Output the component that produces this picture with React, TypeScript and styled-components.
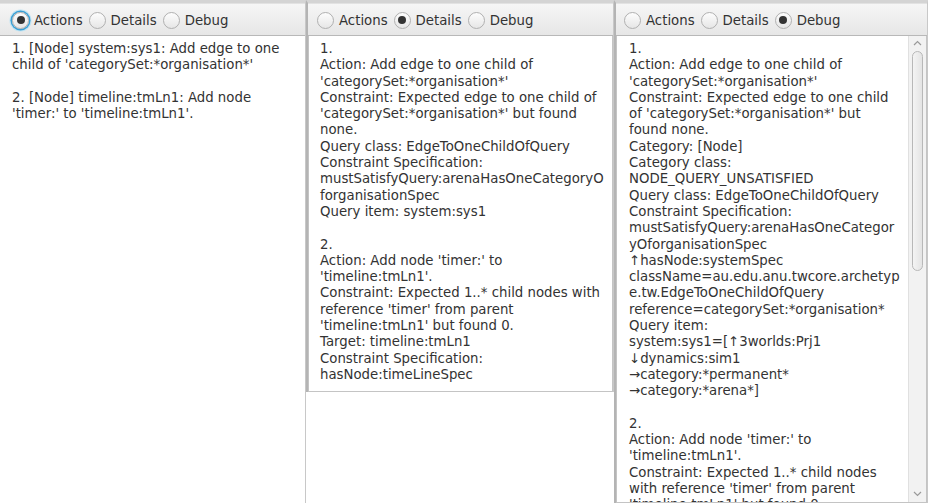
import React from "react";
import styled, { createGlobalStyle } from "styled-components";

const Global = createGlobalStyle`
  html, body { margin: 0; padding: 0; background: #ffffff; }
  body { width: 928px; height: 503px; overflow: hidden; font-family: "DejaVu Sans", "Liberation Sans", sans-serif; }
`;

const Row = styled.div`
  display: flex;
  align-items: flex-start;
  width: 928px;
  height: 503px;
  overflow: hidden;
`;

const Window = styled.div<{ $w: number; $h: number }>`
  width: ${(p) => p.$w}px;
  height: ${(p) => p.$h}px;
  box-sizing: border-box;
  display: flex;
  flex-direction: column;
  border-top: 3px solid #d4d4d4;
  border-left: 2px solid #b4b4b4;
  border-right: 1px solid #c8c8c8;
  background: #ffffff;
  flex: none;
  &:first-child { border-left: none; }
`;

const Toolbar = styled.div<{ $pl: number }>`
  height: 33px;
  flex: none;
  box-sizing: border-box;
  display: flex;
  align-items: center;
  padding-left: ${(p) => p.$pl}px;
  padding-top: 1px;
  gap: 6px;
  background: linear-gradient(#f6f6f6, #e6e6e6);
  border-top: 1px solid #e2e2e2;
  border-bottom: 1px solid #b8b8b8;
`;

const RadioItem = styled.label`
  display: flex;
  align-items: center;
  gap: 5px;
  font-size: 13.3px;
  color: #333333;
  white-space: nowrap;
`;

const Circle = styled.span<{ $on: boolean; $focus: boolean }>`
  width: 17px;
  height: 17px;
  box-sizing: border-box;
  border-radius: 50%;
  border: 1px solid #b0b0b0;
  background: linear-gradient(#fdfdfd, #e6e6e6);
  display: flex;
  align-items: center;
  justify-content: center;
  box-shadow: ${(p) => (p.$focus ? "0 0 0 1.5px #3a9fd4, 0 0 0 2.5px #bfe3f3" : "none")};
  &::after {
    content: "";
    display: ${(p) => (p.$on ? "block" : "none")};
    width: 8px;
    height: 8px;
    border-radius: 50%;
    background: #333333;
  }
`;

const Area = styled.div<{ $bordered: boolean }>`
  flex: 1;
  display: flex;
  min-height: 0;
  box-sizing: border-box;
  border: ${(p) => (p.$bordered ? "1px solid #c4c4c4" : "none")};
  border-top: none;
  overflow: hidden;
`;

const Text = styled.pre<{ $pl: number }>`
  flex: 1;
  margin: 0;
  padding: 5px 0 0 ${(p) => p.$pl}px;
  font-family: "DejaVu Sans", "Liberation Sans", sans-serif;
  font-size: 13.3px;
  line-height: 16.3px;
  color: #333333;
  white-space: pre;
  overflow: hidden;
`;

const ScrollBar = styled.div`
  width: 18px;
  flex: none;
  display: flex;
  flex-direction: column;
  align-items: center;
  background: #f2f2f2;
  border-left: 1px solid #e0e0e0;
  padding: 2px 0 3px;
  box-sizing: border-box;
`;

const Arrow = styled.div`
  height: 10px;
  flex: none;
  display: flex;
  align-items: center;
  justify-content: center;
`;

const Thumb = styled.div`
  width: 11px;
  height: 220px;
  margin-top: 3px;
  box-sizing: border-box;
  border: 1px solid #b8b8b8;
  border-radius: 6px;
  background: linear-gradient(90deg, #f4f4f4, #e4e4e4);
`;

const Spacer = styled.div`
  flex: 1;
`;

const ArrowIcon = ({ up }: { up: boolean }) => (
  <svg width="9" height="6" viewBox="0 0 9 6">
    <path
      d={up ? "M1 5 L4.5 1.5 L8 5" : "M1 1 L4.5 4.5 L8 1"}
      fill="none"
      stroke="#9a9a9a"
      strokeWidth="1.2"
    />
  </svg>
);

const labels = ["Actions", "Details", "Debug"];

const Radios = ({ sel, focus, pl }: { sel: number; focus: boolean; pl: number }) => (
  <Toolbar $pl={pl}>
    {labels.map((l, i) => (
      <RadioItem key={l}>
        <Circle $on={i === sel} $focus={focus && i === sel} />
        {l}
      </RadioItem>
    ))}
  </Toolbar>
);

const t1 = `1. [Node] system:sys1: Add edge to one
child of 'categorySet:*organisation*'

2. [Node] timeline:tmLn1: Add node
'timer:' to 'timeline:tmLn1'.`;

const t2 = `1.
Action: Add edge to one child of
'categorySet:*organisation*'
Constraint: Expected edge to one child of
'categorySet:*organisation*' but found
none.
Query class: EdgeToOneChildOfQuery
Constraint Specification:
mustSatisfyQuery:arenaHasOneCategoryO
forganisationSpec
Query item: system:sys1

2.
Action: Add node 'timer:' to
'timeline:tmLn1'.
Constraint: Expected 1..* child nodes with
reference 'timer' from parent
'timeline:tmLn1' but found 0.
Target: timeline:tmLn1
Constraint Specification:
hasNode:timeLineSpec`;

const t3 = `1.
Action: Add edge to one child of
'categorySet:*organisation*'
Constraint: Expected edge to one child
of 'categorySet:*organisation*' but
found none.
Category: [Node]
Category class:
NODE_QUERY_UNSATISFIED
Query class: EdgeToOneChildOfQuery
Constraint Specification:
mustSatisfyQuery:arenaHasOneCategor
yOforganisationSpec
↑hasNode:systemSpec
className=au.edu.anu.twcore.archetyp
e.tw.EdgeToOneChildOfQuery
reference=categorySet:*organisation*
Query item:
system:sys1=[↑3worlds:Prj1
↓dynamics:sim1
→category:*permanent*
→category:*arena*]

2.
Action: Add node 'timer:' to
'timeline:tmLn1'.
Constraint: Expected 1..* child nodes
with reference 'timer' from parent
'timeline:tmLn1' but found 0.`;

export default function App() {
  return (
    <>
      <Global />
      <Row>
        <Window $w={306} $h={503}>
          <Radios sel={0} focus pl={12} />
          <Area $bordered={false}>
            <Text $pl={12}>{t1}</Text>
          </Area>
        </Window>
        <Window $w={308} $h={392}>
          <Radios sel={1} focus={false} pl={9} />
          <Area $bordered>
            <Text $pl={11}>{t2}</Text>
          </Area>
        </Window>
        <Window $w={314} $h={503}>
          <Radios sel={2} focus={false} pl={8} />
          <Area $bordered>
            <Text $pl={12}>{t3}</Text>
            <ScrollBar>
              <Arrow>
                <ArrowIcon up />
              </Arrow>
              <Thumb />
              <Spacer />
              <Arrow>
                <ArrowIcon up={false} />
              </Arrow>
            </ScrollBar>
          </Area>
        </Window>
      </Row>
    </>
  );
}
